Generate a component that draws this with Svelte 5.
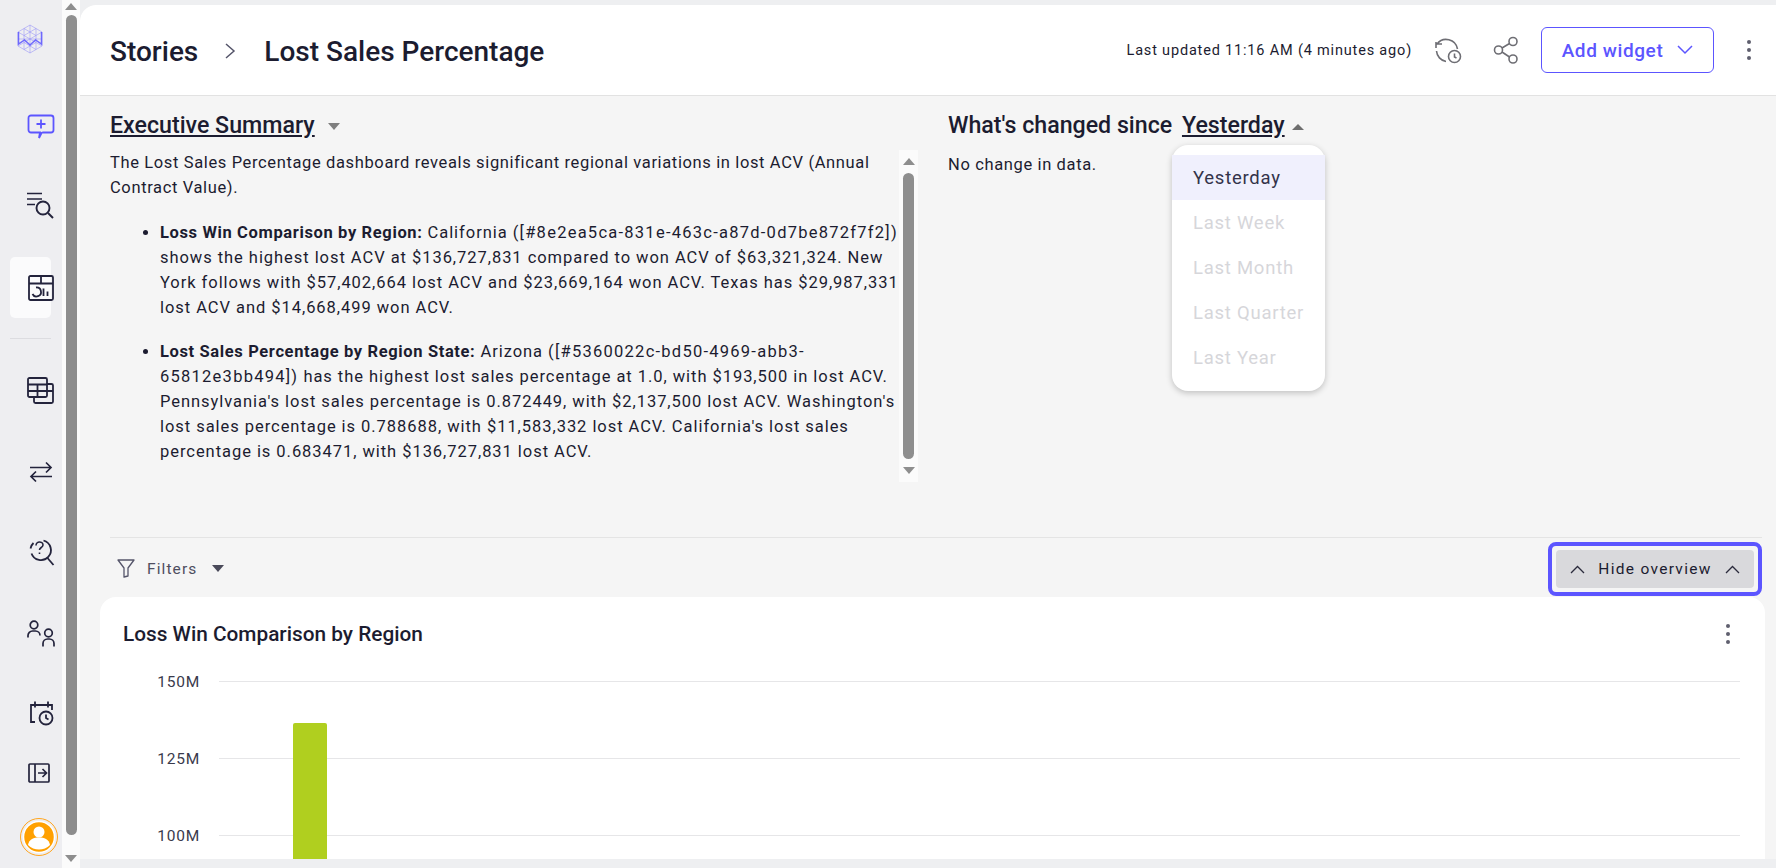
<script>
  const options = ['Yesterday', 'Last Week', 'Last Month', 'Last Quarter', 'Last Year'];
</script>

<div class="page">
  <aside class="rail">
    <svg class="logo" width="26" height="30" viewBox="0 0 26 30" fill="none" stroke="#5c55ff">
      <g stroke-width="0.5" opacity="0.65">
        <path d="M13 1 25 8v14l-12 7-12-7V8z" />
        <path d="M13 1v28M1 8l24 14M25 8 1 22M7 4.500v21M19 4.500v21M1 15h24M7 4.500l12 7M19 4.500l-12 7M7 18.500l12 7M19 18.500l-12 7" />
      </g>
      <path d="M1.500 8v12l6-4 5.500 5 5.500-5 6 4V8" stroke-width="1.500" opacity="0.85" />
    </svg>

    <svg class="ico chat" width="28" height="26" viewBox="0 0 28 26" fill="none" stroke="#5c55ff" stroke-width="1.800">
      <path d="M4 1.500h20a2.500 2.500 0 0 1 2.500 2.500v12a2.500 2.500 0 0 1-2.500 2.500h-8l-1.500.500-2.500 5 1-5.500H4A2.500 2.500 0 0 1 1.500 16V4A2.500 2.500 0 0 1 4 1.500z" />
      <path d="M14 5.500v9M9.500 10h9" />
    </svg>

    <svg class="ico find" width="28" height="28" viewBox="0 0 28 28" fill="none" stroke="#23233c" stroke-width="1.700">
      <path d="M1 1.500h15M1 7h15M1 12.500h8" />
      <circle cx="17" cy="16" r="6.500" stroke-width="1.900" />
      <path d="m22 21 5 5" stroke-width="1.900" />
    </svg>

    <div class="active-slot">
      <svg width="26" height="26" viewBox="0 0 26 26" fill="none" stroke="#23233c" stroke-width="1.800">
        <rect x="1" y="1" width="24" height="24" rx="1.500" />
        <path d="M1 8.500h24M13 1v7.500M8 12.500a4.500 4.500 0 1 1-3.500 6.500M15.500 13.500V21M19.500 16.500V21" />
      </svg>
    </div>

    <div class="rule"></div>

    <svg class="ico tables" width="28" height="28" viewBox="0 0 28 28" fill="none" stroke="#23233c" stroke-width="1.800">
      <rect x="1" y="1" width="19" height="19" rx="1.500" />
      <path d="M1 7.500h19M1 14h25M10.500 7.500V20M20 7h4.500A1.500 1.500 0 0 1 26 8.500v16a1.500 1.500 0 0 1-1.500 1.500h-16A1.500 1.500 0 0 1 7 24.500V20" />
    </svg>

    <svg class="ico swap" width="24" height="22" viewBox="0 0 24 22" fill="none" stroke="#23233c" stroke-width="1.700">
      <path d="M1 6.500h21M17 1.500l5 5-5 5M23 15.500H2M7 10.500l-5 5 5 5" />
    </svg>

    <svg class="ico help" width="26" height="28" viewBox="0 0 26 28" fill="none" stroke="#23233c" stroke-width="1.600">
      <path d="M14.500 1.500a10 10 0 1 1-12 13" stroke-width="1.800" />
      <path d="M1.500 9.500a10 10 0 0 1 3-5.500" stroke-width="1.800" />
      <path d="M7 6.500c0-2.500 2-3.500 3.500-3.500S14 4 14 6c0 2.500-3.500 2.500-3.500 5M10.500 13.500v1.500" />
      <path d="m18.500 19 6 7" stroke-width="1.800" />
    </svg>

    <svg class="ico people" width="30" height="28" viewBox="0 0 30 28" fill="none" stroke="#23233c" stroke-width="1.700">
      <circle cx="7" cy="5" r="3.800" />
      <path d="M1 17.500v-2A4.500 4.500 0 0 1 5.500 11h3a4.500 4.500 0 0 1 4.500 4.500" />
      <circle cx="21.500" cy="13" r="3.800" />
      <path d="M16 26.500v-3a4.500 4.500 0 0 1 4.500-4.500h2a4.500 4.500 0 0 1 4.500 4.500v3" />
    </svg>

    <svg class="ico cal" width="24" height="26" viewBox="0 0 24 26" fill="none" stroke="#23233c" stroke-width="1.800">
      <path d="M5 22H1V5h21v5M5 1.500v6M18 1.500v6" />
      <circle cx="16" cy="18" r="6.500" />
      <path d="M16 14.500V18l2.500 1.500" />
    </svg>

    <svg class="ico panel" width="22" height="20" viewBox="0 0 22 20" fill="none" stroke="#23233c" stroke-width="1.700">
      <rect x="1" y="1" width="20" height="18" rx="1" />
      <path d="M7 1v18M10 10h8M14.500 6l4 4-4 4" />
    </svg>

    <svg class="avatar" width="38" height="38" viewBox="0 0 38 38">
      <circle cx="19" cy="19" r="18.500" fill="none" stroke="#ffa51f" stroke-width="1" />
      <circle cx="19" cy="19" r="15.500" fill="#ffa000" stroke="#fff" stroke-width="1.500" />
      <circle cx="19" cy="14" r="5.500" fill="#fff" />
      <path d="M8 27c1-6 6-7.500 11-7.500S29 21 30 27c-3 3-7 4.500-11 4.500S11 30 8 27z" fill="#fff" />
    </svg>
  </aside>

  <div class="page-scroll">
    <span class="tri up"></span>
    <div class="thumb"></div>
    <span class="tri down"></span>
  </div>

  <main class="main">
    <header class="topbar">
      <div class="crumbs">
        <span>Stories</span>
        <svg width="14" height="20" viewBox="0 0 14 20" fill="none" stroke="#55556a" stroke-width="1.500"><path d="m2 3 8 7-8 7" /></svg>
        <span>Lost Sales Percentage</span>
      </div>
      <div class="top-actions">
        <span class="updated">Last updated 11:16 AM (4 minutes ago)</span>
        <svg class="hist" width="28" height="28" viewBox="0 0 28 28" fill="none" stroke="#6e6e74" stroke-width="1.600">
          <path d="M3 8a11.500 11.500 0 0 1 20.500 5M2 12v-6M2 8h6M2.500 15a11.500 11.500 0 0 0 9.500 10.500" />
          <circle cx="20.500" cy="20.500" r="6" />
          <path d="M20.500 17.500v3.500l2 1" />
        </svg>
        <svg class="share" width="26" height="28" viewBox="0 0 26 28" fill="none" stroke="#6e6e74" stroke-width="1.600">
          <circle cx="20" cy="5.500" r="4" />
          <circle cx="5.500" cy="14" r="4" />
          <circle cx="20" cy="23" r="4" />
          <path d="m9 12 7.500-4.500M9 16l7.500 5" />
        </svg>
        <button class="add">
          Add widget
          <svg width="16" height="10" viewBox="0 0 16 10" fill="none" stroke="#5c55ff" stroke-width="1.500"><path d="m1 1 7 7 7-7" /></svg>
        </button>
        <div class="kebab"><i></i><i></i><i></i></div>
      </div>
    </header>

    <section class="overview">
      <div class="summary">
        <h2><u>Executive Summary</u> <span class="caret-down grey"></span></h2>
        <div class="summary-scroll">
          <div class="summary-text">
            <p>The Lost Sales Percentage dashboard reveals significant regional variations in lost ACV (Annual<br />Contract Value).</p>
            <ul>
              <li><b>Loss Win Comparison by Region:</b> California <span class="ref">([#8e2ea5ca-831e-463c-a87d-0d7be872f7f2])</span><br />shows the highest lost ACV at $136,727,831 compared to won ACV of $63,321,324. New<br />York follows with $57,402,664 lost ACV and $23,669,164 won ACV. Texas has $29,987,331<br />lost ACV and $14,668,499 won ACV.</li>
              <li><b>Lost Sales Percentage by Region State:</b> Arizona <span class="ref">([#5360022c-bd50-4969-abb3-</span><br /><span class="ref">65812e3bb494])</span> has the highest lost sales percentage at 1.0, with $193,500 in lost ACV.<br />Pennsylvania's lost sales percentage is 0.872449, with $2,137,500 lost ACV. Washington's<br />lost sales percentage is 0.788688, with $11,583,332 lost ACV. California's lost sales<br />percentage is 0.683471, with $136,727,831 lost ACV.</li>
            </ul>
          </div>
          <div class="inner-bar">
            <span class="tri up"></span>
            <div class="thumb"></div>
            <span class="tri down"></span>
          </div>
        </div>
      </div>

      <div class="changes">
        <h2>What's changed since <span class="since"><u>Yesterday</u><span class="caret-up"></span></span></h2>
        <p>No change in data.</p>
        <div class="menu">
          {#each options as opt, i}
            <div class="opt" class:sel={i === 0}>{opt}</div>
          {/each}
        </div>
      </div>
    </section>

    <div class="filter-row">
      <div class="filters">
        <svg width="18" height="19" viewBox="0 0 18 19" fill="none" stroke="#55556a" stroke-width="1.300"><path d="M1 1h16l-6 8v8l-4 1V9z" stroke-linejoin="round" /></svg>
        <span>Filters</span>
        <span class="caret-down dark"></span>
      </div>
      <div class="focus-ring">
        <button class="hide">
          <svg width="15" height="9" viewBox="0 0 15 9" fill="none" stroke="#2b2b3c" stroke-width="1.300"><path d="m1 8 6.500-6.500L14 8" /></svg>
          Hide overview
          <svg width="15" height="9" viewBox="0 0 15 9" fill="none" stroke="#2b2b3c" stroke-width="1.300"><path d="m1 8 6.500-6.500L14 8" /></svg>
        </button>
      </div>
    </div>

    <section class="card">
      <div class="card-head">
        <h3>Loss Win Comparison by Region</h3>
        <div class="kebab small"><i></i><i></i><i></i></div>
      </div>
      <div class="chart">
        <div class="tick"><span>150M</span><i></i></div>
        <div class="tick"><span>125M</span><i></i></div>
        <div class="tick"><span>100M</span><i></i></div>
        <div class="bar"></div>
      </div>
    </section>
  </main>
</div>

<style>
  :global(body) {
    margin: 0;
    background: #eeeff1;
  }

  .page {
    display: flex;
    height: 868px;
    overflow: hidden;
    font-family: Roboto, "Noto Sans", sans-serif;
    color: #1c1c30;
  }

  .rail {
    width: 62px;
    flex: none;
    display: flex;
    flex-direction: column;
    background: #eeeef1;
    overflow: visible;
  }

  .logo {
    margin: 24px 0 0 17px;
  }

  .ico {
    display: block;
    flex: none;
  }

  .chat { margin: 60px 0 0 27px; }
  .find { margin: 52px 0 0 26px; }
  .tables { margin: 38px 0 0 27px; }
  .swap { margin: 56px 0 0 29px; }
  .help { margin: 56px 0 0 29px; }
  .people { margin: 53px 0 0 27px; }
  .cal { margin: 52px 0 0 30px; }
  .panel { margin: 37px 0 0 28px; }

  .avatar {
    margin: 35px 0 0 20px;
  }

  .active-slot {
    margin: 37px 0 0 10px;
    width: 41px;
    height: 61px;
    flex: none;
    background: #fbfbfc;
    border-radius: 5px;
    display: flex;
    align-items: center;
  }

  .active-slot svg {
    margin-left: 18px;
    flex: none;
  }

  .rule {
    margin: 20px 0 0 10px;
    width: 41px;
    height: 1px;
    background: #dcdce0;
  }

  .page-scroll {
    width: 18px;
    flex: none;
    background: #fbfbfb;
    display: flex;
    flex-direction: column;
    align-items: center;
    padding: 3px 0 6px;
    box-sizing: border-box;
  }

  .page-scroll .thumb {
    width: 11px;
    flex: 1;
    margin: 5px 0 20px;
    background: #8e8e8e;
    border-radius: 6px;
  }

  .tri {
    width: 0;
    height: 0;
    border-left: 6px solid transparent;
    border-right: 6px solid transparent;
    flex: none;
  }

  .tri.up { border-bottom: 7px solid #8e8e8e; }
  .tri.down { border-top: 7px solid #8e8e8e; }

  .main {
    flex: 1;
    min-width: 0;
    display: flex;
    flex-direction: column;
    margin-top: 5px;
    height: 854px;
    background: #f5f5f5;
    border-radius: 16px 0 0 0;
    overflow: hidden;
  }

  .topbar {
    height: 91px;
    flex: none;
    box-sizing: border-box;
    background: #fff;
    border-bottom: 1px solid #e2e2e2;
    border-radius: 16px 0 0 0;
    display: flex;
    align-items: center;
    justify-content: space-between;
    padding: 0 25px 0 30px;
  }

  .crumbs {
    display: flex;
    align-items: center;
    gap: 26px;
    margin-top: 2px;
    font-size: 28px;
    font-weight: 500;
  }

  .top-actions {
    display: flex;
    align-items: center;
  }

  .updated {
    font-size: 14.500px;
    letter-spacing: 0.82px;
    margin-right: 22px;
  }

  .hist { margin-right: 31px; }
  .share { margin-right: 22px; }

  .add {
    width: 173px;
    height: 46px;
    box-sizing: border-box;
    border: 1px solid #5c55ff;
    border-radius: 6px;
    background: #fff;
    color: #5c55ff;
    font: 500 19px Roboto, sans-serif;
    letter-spacing: 0.6px;
    display: flex;
    align-items: center;
    justify-content: center;
    gap: 14px;
  }

  .kebab {
    display: flex;
    flex-direction: column;
    gap: 4px;
    margin-left: 33px;
    width: 4px;
  }

  .kebab i {
    width: 4px;
    height: 4px;
    border-radius: 50%;
    background: #5f5f6e;
  }

  .overview {
    height: 442px;
    flex: none;
    box-sizing: border-box;
    margin: 0 14px 0 30px;
    border-bottom: 1px solid #e4e4e4;
    display: flex;
    position: relative;
    padding-top: 14px;
  }

  h2 {
    margin: 0;
    font-size: 23.200px;
    line-height: 30px;
    font-weight: 500;
  }

  .summary {
    width: 808px;
    flex: none;
  }

  .caret-down {
    display: inline-block;
    width: 0;
    height: 0;
    border-left: 6.500px solid transparent;
    border-right: 6.500px solid transparent;
    border-top: 7px solid #7f7f7f;
    margin-left: 8px;
    vertical-align: middle;
  }

  .caret-down.dark {
    border-top-color: #4a4a5a;
    margin-left: 6px;
  }

  .caret-up {
    display: inline-block;
    width: 0;
    height: 0;
    border-left: 6.500px solid transparent;
    border-right: 6.500px solid transparent;
    border-bottom: 6px solid #6e6e6e;
    margin-left: 7px;
    vertical-align: middle;
  }

  .summary-scroll {
    display: flex;
    margin-top: 10px;
    height: 332px;
  }

  .summary-text {
    width: 789px;
    flex: none;
    font-size: 16.500px;
    line-height: 25px;
    letter-spacing: 0.63px;
    white-space: nowrap;
  }

  .summary-text p {
    margin: 0 0 20px;
  }

  .summary-text ul {
    margin: 0;
    padding-left: 50px;
    letter-spacing: 0.95px;
  }

  .summary-text li {
    margin-bottom: 19px;
  }

  .summary-text b {
    font-weight: 700;
    letter-spacing: 0.63px;
  }

  .ref {
    letter-spacing: 1.250px;
  }

  .inner-bar {
    width: 19px;
    flex: none;
    background: #fbfbfb;
    display: flex;
    flex-direction: column;
    align-items: center;
    padding: 8px 0;
    box-sizing: border-box;
  }

  .inner-bar .tri {
    border-left-width: 6px;
    border-right-width: 6px;
  }

  .inner-bar .thumb {
    flex: 1;
    width: 11px;
    margin: 8px 0 8px;
    background: #8e8e8e;
    border-radius: 6px;
  }

  .changes {
    margin-left: 30px;
    position: relative;
    flex: 1;
  }

  .since {
    margin-left: 4px;
  }

  .changes p {
    margin: 12px 0 0;
    font-size: 16.500px;
    line-height: 25px;
    letter-spacing: 0.63px;
  }

  .menu {
    position: absolute;
    left: 224px;
    top: 35px;
    width: 153px;
    height: 246px;
    box-sizing: border-box;
    padding: 10px 0;
    background: #fff;
    border-radius: 16px;
    box-shadow: 0 2px 6px rgba(0, 0, 0, 0.22);
  }

  .opt {
    height: 45px;
    line-height: 46px;
    padding-left: 21px;
    font-size: 18.500px;
    letter-spacing: 0.75px;
    color: #d6d6da;
  }

  .opt.sel {
    background: #f0f0fd;
    color: #33334a;
  }

  .filter-row {
    height: 59px;
    flex: none;
    margin: 0 14px 0 30px;
    display: flex;
    align-items: center;
    justify-content: space-between;
  }

  .filters {
    display: flex;
    align-items: center;
    gap: 12px;
    margin: 2px 0 0 7px;
    font-size: 15.500px;
    letter-spacing: 1.100px;
    color: #4e4e60;
  }

  .filters .caret-down {
    margin-left: 3px;
  }

  .focus-ring {
    box-sizing: border-box;
    width: 214px;
    height: 54px;
    border: 4px solid #5c55ff;
    border-radius: 8px;
    padding: 4px;
    margin-top: 3px;
  }

  .hide {
    width: 100%;
    height: 100%;
    border: none;
    border-radius: 4px;
    background: #d9d9dc;
    color: #1c1c30;
    font: 400 15.500px Roboto, sans-serif;
    letter-spacing: 1.300px;
    display: flex;
    align-items: center;
    justify-content: center;
    gap: 13px;
  }

  .card {
    flex: 1;
    margin: 0 11px 0 20px;
    background: #fff;
    border-radius: 16px 16px 0 0;
    padding: 0 23px;
    overflow: hidden;
  }

  .card-head {
    height: 20px;
    padding-top: 27px;
    display: flex;
    align-items: center;
    justify-content: space-between;
  }

  .card-head h3 {
    margin: 0;
    font-size: 20.800px;
    font-weight: 500;
  }

  .kebab.small {
    margin: 0 12px 0 0;
  }

  .chart {
    position: relative;
    margin-top: -1px;
  }

  .tick {
    display: flex;
    align-items: center;
    height: 77px;
    gap: 19px;
  }

  .tick span {
    width: 77px;
    flex: none;
    text-align: right;
    font-size: 15.500px;
    letter-spacing: 0.8px;
    color: #3a3a4c;
  }

  .tick i {
    flex: 1;
    height: 1px;
    margin-right: 2px;
    background: #e6e6e8;
  }

  .bar {
    position: absolute;
    left: 170px;
    top: 80px;
    width: 34px;
    height: 200px;
    border-radius: 2px 2px 0 0;
    background: #b0cf1f;
  }
</style>
